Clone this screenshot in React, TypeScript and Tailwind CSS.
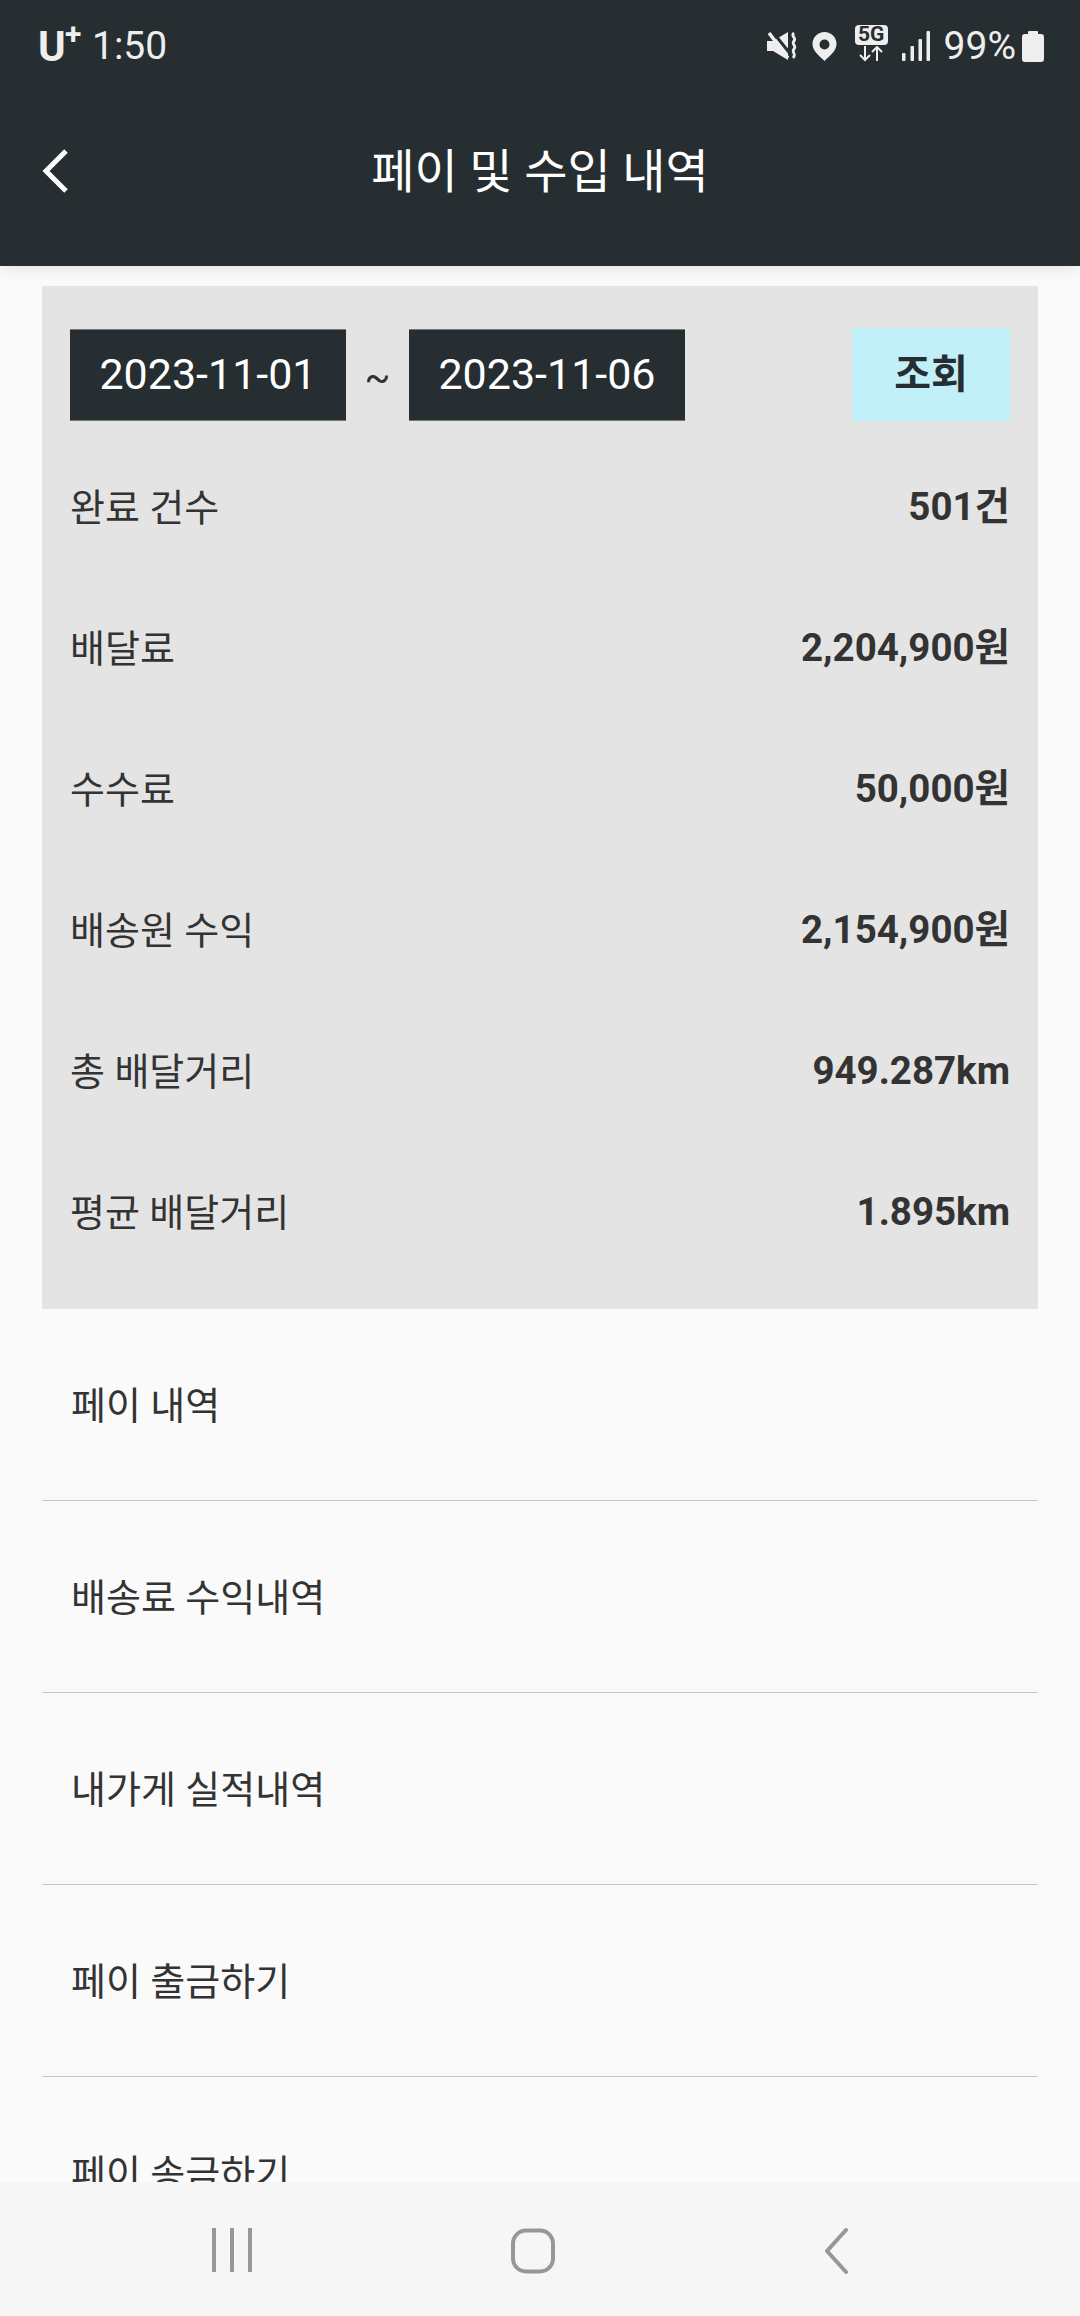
const stats = [
  ['완료 건수', '501건'],
  ['배달료', '2,204,900원'],
  ['수수료', '50,000원'],
  ['배송원 수익', '2,154,900원'],
  ['총 배달거리', '949.287km'],
  ['평균 배달거리', '1.895km'],
];
const menu = ['페이 내역', '배송료 수익내역', '내가게 실적내역', '페이 출금하기', '페이 송금하기'];

function StatusIcons() {
  return (
    <div className="flex items-center">
      <svg width="30" height="28" viewBox="0 0 30 28" className="mt-[-1px]">
        <path d="M0 9h6L21 0v28L6 19H0z" fill="#eee" />
        <path d="M5 -1l20 25" stroke="#262e31" strokeWidth="3" />
        <path d="M2 1l19 25" stroke="#eee" strokeWidth="3.500" />
        <path d="M27 1c-4 3 3 5 0 8s3 5 0 8 3 5-1 9" stroke="#eee" strokeWidth="2.800" fill="none" />
      </svg>
      <svg width="25" height="29" viewBox="0 0 24 29" className="ml-[15px]">
        <path fillRule="evenodd" d="M12 0a12 12 0 0 1 12 12c0 7-7 12-12 17C7 24 0 19 0 12A12 12 0 0 1 12 0zm0 7.500a5 5 0 1 0 0 10 5 5 0 0 0 0-10z" fill="#eee" />
      </svg>
      <div className="ml-[18px] mt-[-7px] flex h-[37px] w-[33px] flex-col items-center">
        <div className="flex h-[20px] w-[33px] items-center justify-center rounded-[4px] bg-[#eeeeee] text-[21px] leading-none font-bold text-[#262e31]">5G</div>
        <svg width="26" height="16" viewBox="0 0 26 16" className="mt-[1px]">
          <path d="M7 0v14M2 9l5 5 5-5M19 15V1M14 6l5-5 5 5" stroke="#eee" strokeWidth="2" fill="none" />
        </svg>
      </div>
      <svg width="28" height="30" viewBox="0 0 28 30" className="ml-[14px] mt-[-2px]">
        <rect x="0" y="22" width="3.500" height="8" rx="1" fill="#eee" />
        <rect x="8.500" y="15" width="3.500" height="15" rx="1" fill="#eee" />
        <rect x="16.500" y="8" width="3.500" height="22" rx="1" fill="#eee" />
        <rect x="24.500" y="0" width="3.500" height="30" rx="1" fill="#eee" />
      </svg>
      <span className="ml-[14px] text-[39px] leading-none text-[#eeeeee]">99%</span>
      <svg width="22" height="31" viewBox="0 0 22 31" className="ml-[6px] mt-[-1px]">
        <path d="M7 0h8a1 1 0 0 1 1 1v2h3a3 3 0 0 1 3 3v22a3 3 0 0 1-3 3H3a3 3 0 0 1-3-3V6a3 3 0 0 1 3-3h3V1a1 1 0 0 1 1-1z" fill="#eee" />
      </svg>
    </div>
  );
}

export default function App() {
  return (
    <div className="flex h-[2316px] w-[1080px] flex-col overflow-hidden bg-[#fafafa] font-['Roboto','Noto_Sans_CJK_KR',sans-serif] text-[#333333]">
      <header className="relative z-10 h-[266px] shrink-0 bg-[#262e31] shadow-[0_4px_14px_rgba(0,0,0,0.08)]">
        <div className="flex h-[90px] items-center justify-between pt-[3px] pr-[36px] pl-[38px]">
          <div className="flex items-center text-[#eeeeee]">
            <span className="relative w-[44px] text-[42px] leading-none font-bold">
              U
              <span className="absolute top-[-7px] left-[27px] text-[30px] leading-none font-bold">+</span>
            </span>
            <span className="ml-[10px] text-[39px] leading-none">1:50</span>
          </div>
          <StatusIcons />
        </div>
        <div className="relative flex h-[162px] items-center justify-center">
          <svg width="28" height="46" viewBox="0 0 28 46" className="absolute top-[58px] left-[41px]">
            <path d="M25 3 5 23l20 20" stroke="#ffffff" strokeWidth="5" fill="none" />
          </svg>
          <h1 className="text-[47px] leading-none font-normal text-white">페이 및 수입 내역</h1>
        </div>
      </header>

      <main className="mx-[42px] mt-[20px] min-h-0 flex-1 overflow-hidden">
        <section className="bg-[#e4e4e4] pt-[42px] pr-[28px] pb-[26px] pl-[28px]">
          <div className="flex items-center">
            <div className="flex h-[92px] w-[276px] items-center justify-center border-y border-[#777777] bg-[#262e31] text-[43px] leading-none text-white">2023-11-01</div>
            <span className="w-[63px] pt-[6px] text-center text-[38px] leading-none text-[#333333]">~</span>
            <div className="flex h-[92px] w-[276px] items-center justify-center border-y border-[#777777] bg-[#262e31] text-[43px] leading-none text-white">2023-11-06</div>
            <button className="ml-auto h-[93px] w-[158px] bg-[#c2f0f9] text-[40px] leading-none font-bold text-[#262e31]">조회</button>
          </div>
          <dl className="mt-[16px]">
            {stats.map(([label, value]) => (
              <div key={label} className="flex h-[141px] items-center justify-between">
                <dt className="text-[38px] leading-none">{label}</dt>
                <dd className="text-[38.500px] leading-none font-bold">{value}</dd>
              </div>
            ))}
          </dl>
        </section>
        <ul>
          {menu.map((item) => (
            <li key={item} className="flex h-[192px] items-center border-b border-[#c4c4c4] pt-[2px] pl-[29px] text-[38px] leading-none">
              {item}
            </li>
          ))}
        </ul>
      </main>

      <nav className="relative z-10 flex h-[134px] shrink-0 items-start bg-[#f6f6f6] pt-[46px]">
        <svg width="40" height="44" viewBox="0 0 40 44" className="ml-[212px]">
          <path d="M2 1v42M20 1v42M38 1v42" stroke="#979797" strokeWidth="4" strokeLinecap="round" fill="none" />
        </svg>
        <svg width="46" height="46" viewBox="0 0 46 46" className="ml-[258px]">
          <rect x="3" y="2.500" width="40" height="41" rx="13" stroke="#979797" strokeWidth="4" fill="none" />
        </svg>
        <svg width="26" height="46" viewBox="0 0 26 46" className="ml-[267px]">
          <path d="M23 2 4 23l19 21" stroke="#979797" strokeWidth="4" strokeLinecap="round" strokeLinejoin="round" fill="none" />
        </svg>
      </nav>
    </div>
  );
}
